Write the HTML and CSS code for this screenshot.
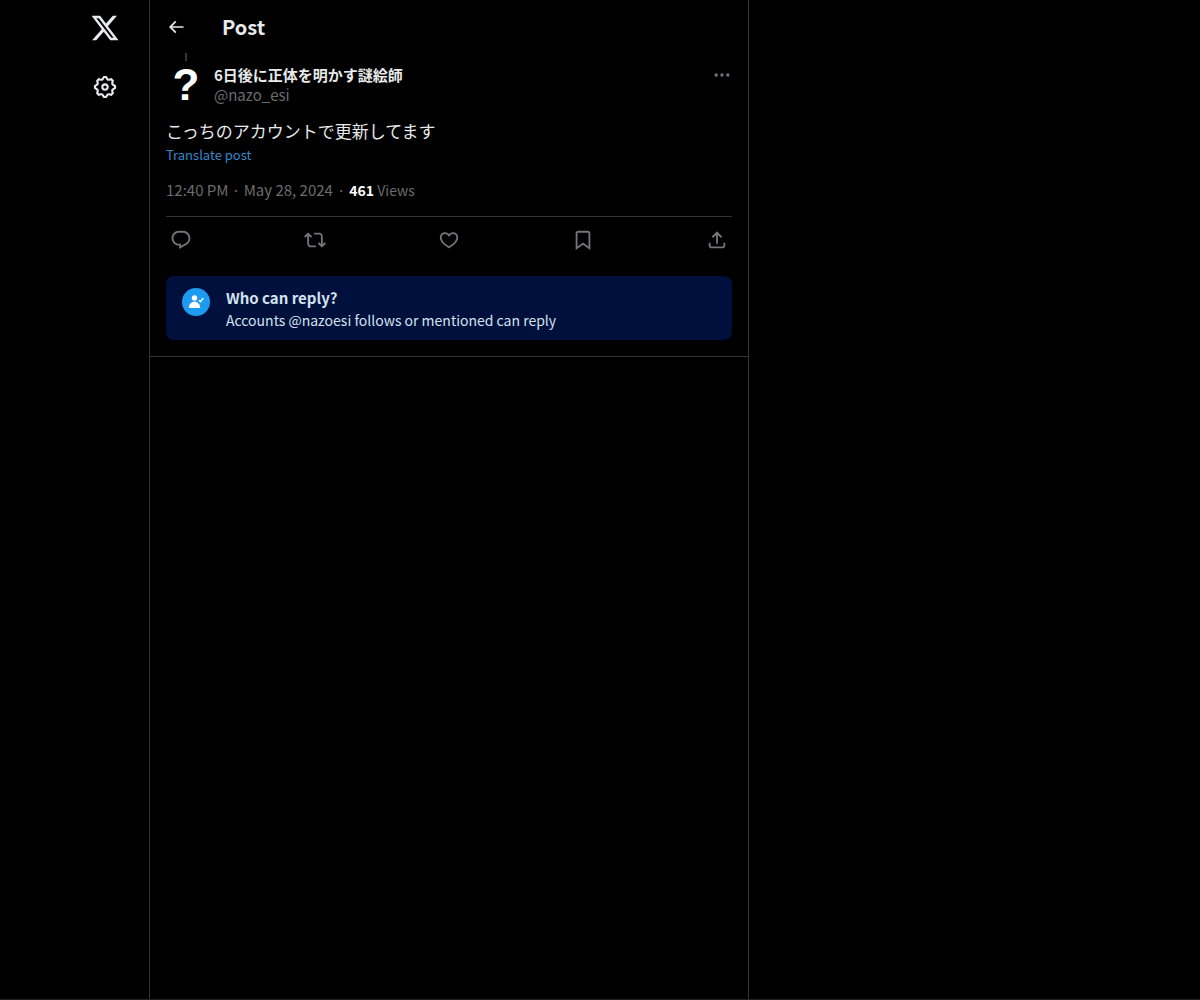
FILE: index.html
```html
<!DOCTYPE html>
<html lang="en">
<head>
<meta charset="utf-8">
<meta name="viewport" content="width=device-width, initial-scale=1">
<title>Post / X</title>
<link rel="stylesheet" href="styles.css">
</head>
<body>
<div class="layout">
  <nav class="sidebar" aria-label="Primary">
    <a class="nav-link" href="#" aria-label="X"><svg class="logo" viewBox="0 0 24 24"><path d="M18.244 2.25h3.308l-7.227 8.26 8.502 11.24H16.17l-5.214-6.817L4.99 21.75H1.68l7.73-8.835L1.254 2.25H8.08l4.713 6.231zm-1.161 17.52h1.833L7.084 4.126H5.117z"/></svg></a>
    <a class="nav-link" href="#" aria-label="Settings"><svg class="gear" viewBox="0 0 24 24"><path d="M10.54 1.75h2.92l1.57 2.36c.11.17.32.25.53.21l2.53-.59 2.17 2.17-.58 2.54c-.05.2.04.41.21.53l2.36 1.57v2.92l-2.36 1.57c-.17.12-.26.33-.21.53l.58 2.54-2.17 2.17-2.53-.59c-.21-.04-.42.04-.53.21l-1.57 2.36h-2.92l-1.58-2.36c-.11-.17-.32-.25-.52-.21l-2.54.59-2.17-2.17.58-2.54c.05-.2-.03-.41-.21-.53l-2.35-1.57v-2.92L4.1 8.97c.18-.12.26-.33.21-.53L3.73 5.9 5.9 3.73l2.54.59c.2.04.41-.04.52-.21l1.58-2.36zm1.07 2l-.98 1.47C10.05 6.08 9 6.5 7.99 6.27l-1.46-.34-.6.6.33 1.46c.24 1.01-.18 2.07-1.05 2.64l-1.46.98v.78l1.46.98c.87.57 1.29 1.63 1.05 2.64l-.33 1.46.6.6 1.46-.34c1.01-.23 2.06.19 2.64 1.05l.98 1.47h.78l.97-1.47c.58-.86 1.63-1.28 2.65-1.05l1.45.34.61-.6-.34-1.46c-.23-1.01.18-2.07 1.05-2.64l1.47-.98v-.78l-1.47-.98c-.87-.57-1.28-1.63-1.05-2.64l.34-1.46-.61-.6-1.45.34c-1.02.23-2.07-.19-2.65-1.05l-.97-1.47h-.78zM12 10.5c-.83 0-1.5.67-1.5 1.5s.67 1.5 1.5 1.5 1.5-.67 1.5-1.5-.67-1.5-1.5-1.5zM8.5 12c0-1.93 1.56-3.5 3.5-3.5 1.93 0 3.5 1.57 3.5 3.5s-1.57 3.5-3.5 3.5c-1.94 0-3.5-1.57-3.5-3.5z"/></svg></a>
  </nav>
  <main class="column">
    <header class="topbar">
      <button class="back" type="button" aria-label="Back"><svg viewBox="0 0 24 24"><path d="M7.414 13l5.043 5.04-1.414 1.42L3.586 12l7.457-7.46 1.414 1.42L7.414 11H21v2H7.414z"/></svg></button>
      <h1 class="title">Post</h1>
    </header>
    <article class="post">
      <div class="thread-line"></div>
      <div class="author">
        <a class="avatar" href="#">?</a>
        <div class="names">
          <a class="name" href="#" lang="ja">6日後に正体を明かす謎絵師</a>
          <a class="handle" href="#">@nazo_esi</a>
        </div>
        <button class="more" type="button" aria-label="More"><svg viewBox="0 0 24 24"><path d="M3 12c0-1.1.9-2 2-2s2 .9 2 2-.9 2-2 2-2-.9-2-2zm9 2c1.1 0 2-.9 2-2s-.9-2-2-2-2 .9-2 2 .9 2 2 2zm7 0c1.1 0 2-.9 2-2s-.9-2-2-2-2 .9-2 2 .9 2 2 2z"/></svg></button>
      </div>
      <p class="text" lang="ja">こっちのアカウントで更新してます</p>
      <button class="translate" type="button">Translate post</button>
      <div class="meta"><a href="#">12:40 PM · May 28, 2024</a><span>·</span><span class="views"><strong>461</strong> Views</span></div>
      <div class="actions">
        <button type="button" aria-label="Reply"><svg viewBox="0 0 24 24"><path d="M1.751 10c0-4.42 3.584-8 8.005-8h4.366c4.49 0 8.129 3.64 8.129 8.13 0 2.96-1.607 5.68-4.196 7.11l-8.054 4.46v-3.69h-.067c-4.49.1-8.183-3.51-8.183-8.01zm8.005-6c-3.317 0-6.005 2.69-6.005 6 0 3.37 2.77 6.08 6.138 6.01l.351-.01h1.761v2.3l5.087-2.81c1.951-1.08 3.163-3.13 3.163-5.36 0-3.39-2.744-6.13-6.129-6.13H9.756z"/></svg></button>
        <button type="button" aria-label="Repost"><svg viewBox="0 0 24 24"><path d="M4.5 3.88l4.432 4.14-1.364 1.46L5.5 7.55V16c0 1.1.896 2 2 2H13v2H7.5c-2.209 0-4-1.79-4-4V7.55L1.432 9.48.068 8.02 4.5 3.88zM16.5 6H11V4h5.5c2.209 0 4 1.79 4 4v8.45l2.068-1.93 1.364 1.46-4.432 4.14-4.432-4.14 1.364-1.46 2.068 1.93V8c0-1.1-.896-2-2-2z"/></svg></button>
        <button type="button" aria-label="Like"><svg viewBox="0 0 24 24"><path d="M16.697 5.5c-1.222-.06-2.679.51-3.89 2.16l-.805 1.09-.806-1.09C9.984 6.01 8.526 5.44 7.304 5.5c-1.243.07-2.349.78-2.91 1.91-.552 1.12-.633 2.78.479 4.82 1.074 1.97 3.257 4.27 7.129 6.61 3.87-2.34 6.052-4.64 7.126-6.61 1.111-2.04 1.03-3.7.477-4.82-.561-1.13-1.666-1.84-2.908-1.91zm4.187 7.69c-1.351 2.48-4.001 5.12-8.379 7.67l-.503.3-.504-.3c-4.379-2.55-7.029-5.19-8.382-7.67-1.36-2.5-1.41-4.86-.514-6.67.887-1.79 2.647-2.91 4.601-3.01 1.651-.09 3.368.56 4.798 2.01 1.429-1.45 3.146-2.1 4.796-2.01 1.954.1 3.714 1.22 4.601 3.01.896 1.81.846 4.17-.514 6.67z"/></svg></button>
        <button type="button" aria-label="Bookmark"><svg viewBox="0 0 24 24"><path d="M4 4.5C4 3.12 5.119 2 6.5 2h11C18.881 2 20 3.12 20 4.5v18.44l-8-5.71-8 5.71V4.5zM6.5 4c-.276 0-.5.22-.5.5v14.56l6-4.29 6 4.29V4.5c0-.28-.224-.5-.5-.5h-11z"/></svg></button>
        <button type="button" aria-label="Share"><svg viewBox="0 0 24 24"><path d="M12 2.59l5.7 5.7-1.41 1.42L13 6.41V16h-2V6.41l-3.3 3.3-1.41-1.42L12 2.59zM21 15l-.02 3.51c0 1.38-1.12 2.49-2.5 2.49H5.5C4.11 21 3 19.88 3 18.5V15h2v3.5c0 .28.22.5.5.5h12.98c.28 0 .5-.22.5-.5L19 15h2z"/></svg></button>
      </div>
      <aside class="notice">
        <span class="badge"><svg viewBox="0 0 28 28"><circle cx="12.5" cy="10" r="2.7"/><path d="M6.8 20c.1-4 2.2-6.300 5.700-6.300s5.600 2.300 5.700 6.300z"/><path class="tick" d="M17 12.300l1.400 1.300 2.800-3.500"/></svg></span>
        <div>
          <h2 class="notice-title">Who can reply?</h2>
          <p class="notice-text">Accounts @nazoesi follows or mentioned can reply</p>
        </div>
      </aside>
    </article>
  </main>
</div>
</body>
</html>
```
FILE: styles.css
```css
* { box-sizing: border-box; }

body {
  margin: 0;
  background: #000;
  color: #e7e9ea;
  font: 15px/20px "Noto Sans CJK JP", sans-serif;
}

h1, h2, p { margin: 0; }
a { color: inherit; text-decoration: none; }
button {
  display: flex;
  padding: 0;
  border: 0;
  background: none;
  color: inherit;
  font: inherit;
  cursor: pointer;
}
svg { display: block; fill: currentColor; }

.layout {
  display: grid;
  grid-template-columns: minmax(60px, 149px) minmax(0, 600px) 1fr;
  min-height: 100vh;
  border-bottom: 1px solid #241f20;
}

.sidebar {
  display: flex;
  flex-direction: column;
  align-items: flex-end;
  gap: 3px;
  padding-right: 16px;
}
.nav-link {
  display: grid;
  place-items: center;
  width: 56px;
  height: 56px;
}
.logo { width: 30px; height: 30px; }
.gear { width: 26px; height: 26px; }

.column {
  border: solid #333;
  border-width: 0 1px;
}

.topbar {
  display: flex;
  align-items: center;
  gap: 36px;
  height: 53px;
  padding: 0 16px;
}
.back svg { width: 20px; height: 20px; }
.title { font-size: 20px; line-height: 24px; }

.post {
  padding: 0 16px 16px;
  border-bottom: 1px solid #333;
}
.thread-line {
  width: 2px;
  height: 8px;
  margin: 0 0 4px 19px;
  background: #333639;
}

.author { display: flex; gap: 8px; }
.avatar {
  width: 40px;
  height: 40px;
  border-radius: 50%;
  color: #fff;
  font: bold 44px/40px "Liberation Sans", Arial, sans-serif;
  text-align: center;
}
.names {
  display: flex;
  flex: 1;
  flex-direction: column;
  align-items: flex-start;
}
.name { font-weight: 700; }
.handle { color: #6a6d70; }
.more { align-self: flex-start; color: #71767b; }
.more svg { width: 20px; height: 20px; }

.text { margin-top: 14px; font-size: 17px; line-height: 24px; }
.translate { color: #3a87cc; font-size: 13px; line-height: 24px; }

.meta {
  display: flex;
  gap: 4px;
  padding: 13px 0 16px;
  color: #6c6c6c;
}
.views { font-size: 14px; }
.meta strong { color: #fff; }

.actions {
  display: flex;
  justify-content: space-between;
  padding: 12px 4px 25px;
  border-top: 1px solid #333;
  color: #71767b;
}
.actions svg { width: 22px; height: 22px; }

.notice {
  display: flex;
  gap: 16px;
  padding: 12px 16px 10px;
  border-radius: 8px;
  background: #00103c;
  color: #d3e2ee;
}
.badge {
  width: 28px;
  height: 28px;
  border-radius: 50%;
  background: #1d9bf0;
  color: #fff;
}
.tick { fill: none; stroke: currentColor; stroke-width: 1.5; }
.notice-title { font-size: 15px; line-height: 20px; }
.notice-text { margin-top: 2px; font-size: 14px; }
```
